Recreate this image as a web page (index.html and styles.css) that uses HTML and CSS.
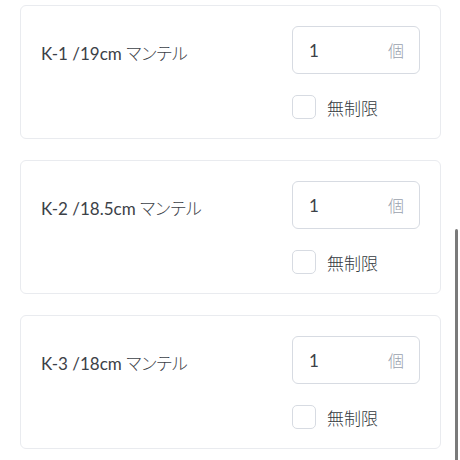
FILE: index.html
```html
<!DOCTYPE html>
<html lang="ja">
<head>
    <meta charset="UTF-8">
    <meta name="viewport" content="width=device-width, initial-scale=1.0">
    <title>在庫設定</title>
    <link rel="stylesheet" href="styles.css">
</head>
<body>
    <div class="stock-list">
        <div class="stock-card">
            <div class="stock-card__name">K-1 /19cm <span class="jp">マンテル</span></div>
            <div class="stock-card__controls">
                <div class="qty-input">
                    <span class="qty-input__value">1</span>
                    <span class="qty-input__unit jp">個</span>
                </div>
                <label class="unlimited">
                    <span class="unlimited__box"></span>
                    <span class="unlimited__text jp">無制限</span>
                </label>
            </div>
        </div>

        <div class="stock-card">
            <div class="stock-card__name">K-2 /18.5cm <span class="jp">マンテル</span></div>
            <div class="stock-card__controls">
                <div class="qty-input">
                    <span class="qty-input__value">1</span>
                    <span class="qty-input__unit jp">個</span>
                </div>
                <label class="unlimited">
                    <span class="unlimited__box"></span>
                    <span class="unlimited__text jp">無制限</span>
                </label>
            </div>
        </div>

        <div class="stock-card">
            <div class="stock-card__name">K-3 /18cm <span class="jp">マンテル</span></div>
            <div class="stock-card__controls">
                <div class="qty-input">
                    <span class="qty-input__value">1</span>
                    <span class="qty-input__unit jp">個</span>
                </div>
                <label class="unlimited">
                    <span class="unlimited__box"></span>
                    <span class="unlimited__text jp">無制限</span>
                </label>
            </div>
        </div>
    </div>

    <div class="scrollbar-thumb"></div>
</body>
</html>
```

FILE: styles.css
```css
* {
    margin: 0;
    padding: 0;
    box-sizing: border-box;
}

body {
    font-family: Lato, "Noto Sans CJK JP", sans-serif;
    background: #ffffff;
    color: #333333;
    overflow: hidden;
}

.jp {
    font-family: "Noto Sans CJK JP", sans-serif;
    font-weight: 300;
}

.stock-list {
    display: flex;
    flex-direction: column;
    gap: 21px;
    padding: 5px 19px 0 20px;
}

.stock-card {
    display: flex;
    justify-content: space-between;
    align-items: flex-start;
    padding: 20px 20px 19px 20px;
    border: 1px solid #e9ebef;
    border-radius: 6px;
    background: #ffffff;
}

.stock-card__name {
    padding-top: 3px;
    font-size: 17px;
    line-height: 48px;
    color: #3c4147;
    font-feature-settings: "palt";
}

.stock-card__controls {
    display: flex;
    flex-direction: column;
    gap: 21px;
    width: 128px;
}

.qty-input {
    display: flex;
    justify-content: space-between;
    align-items: center;
    height: 48px;
    padding: 0 15px 0 16px;
    border: 1px solid #d7dbe2;
    border-radius: 6px;
}

.qty-input__value {
    font-size: 17px;
    color: #3c4147;
}

.qty-input__unit {
    font-size: 16px;
    color: #9aa1ad;
}

.unlimited {
    display: flex;
    align-items: center;
    gap: 11px;
    height: 24px;
}

.unlimited__box {
    width: 24px;
    height: 24px;
    border: 1px solid #d7dbe2;
    border-radius: 5px;
}

.unlimited__text {
    font-size: 17px;
    color: #343a40;
}

.scrollbar-thumb {
    position: absolute;
    left: 455px;
    top: 229px;
    width: 3px;
    height: 240px;
    background: #7a7a7a;
    border-radius: 2px;
}
```
